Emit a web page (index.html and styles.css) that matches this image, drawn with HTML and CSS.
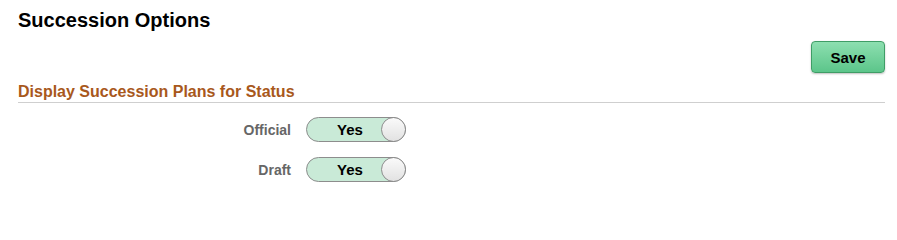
FILE: index.html
```html
<!DOCTYPE html>
<html>
<head>
<meta charset="utf-8">
<link rel="stylesheet" href="styles.css">
</head>
<body>
<div class="page">
  <h1 class="title">Succession Options</h1>
  <div class="toolbar">
    <button class="btn-save">Save</button>
  </div>
  <h2 class="section">Display Succession Plans for Status</h2>
  <div class="rows">
    <div class="row">
      <span class="label">Official</span>
      <span class="toggle"><span class="toggle-text">Yes</span><span class="knob"></span></span>
    </div>
    <div class="row">
      <span class="label">Draft</span>
      <span class="toggle"><span class="toggle-text">Yes</span><span class="knob"></span></span>
    </div>
  </div>
</div>
</body>
</html>
```
FILE: styles.css
```css
html, body {
  margin: 0;
  padding: 0;
  background: #fff;
  font-family: "Liberation Sans", Arial, sans-serif;
}
.page {
  padding: 8px 12px 0 18px;
}
.title {
  margin: 0;
  font-size: 20px;
  font-weight: bold;
  color: #000;
  line-height: 24px;
}
.toolbar {
  display: flex;
  justify-content: flex-end;
  margin-top: 9px;
}
.btn-save {
  width: 74px;
  height: 32px;
  border: 1px solid #3f9d66;
  border-radius: 4px;
  background: linear-gradient(#8ddfb0, #5cc58a);
  box-shadow: 0 1px 2px rgba(0,0,0,0.25);
  font-family: "Liberation Sans", Arial, sans-serif;
  font-weight: bold;
  font-size: 15px;
  color: #000;
  padding: 0;
}
.section {
  margin: 10px 0 0 0;
  font-size: 16px;
  font-weight: bold;
  color: #a8581c;
  line-height: 18px;
  padding-bottom: 1px;
  border-bottom: 1px solid #cfcfcf;
}
.rows {
  display: flex;
  flex-direction: column;
  gap: 15px;
  margin-top: 14px;
}
.row {
  display: flex;
  align-items: center;
}
.label {
  text-align: right;
  font-size: 14px;
  font-weight: bold;
  color: #666;
  padding-right: 15px;
  padding-top: 1px;
  box-sizing: border-box;
  width: 288px;
}
.toggle {
  position: relative;
  display: flex;
  align-items: center;
  width: 100px;
  height: 25px;
  box-sizing: border-box;
  border: 1px solid #8d8d8d;
  border-radius: 12.5px;
  background: #c9ead7;
}
.toggle-text {
  width: 86px;
  text-align: center;
  font-size: 15px;
  font-weight: bold;
  color: #000;
}
.knob {
  position: absolute;
  right: -1px;
  top: -1px;
  width: 23px;
  height: 23px;
  border: 1px solid #8d8d8d;
  border-radius: 50%;
  background: linear-gradient(#fafafa, #e2e2e2);
}
```
